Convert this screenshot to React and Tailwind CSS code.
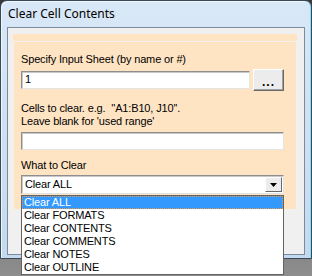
export default function App() {
  const items = ["Clear ALL", "Clear FORMATS", "Clear CONTENTS", "Clear COMMENTS", "Clear NOTES", "Clear OUTLINE"];
  const sunken =
    "border border-t-[#8e8e8e] border-l-[#8e8e8e] border-b-[#e4e4e4] border-r-[#e4e4e4] bg-white shadow-[inset_1px_1px_0_#c8c8c8]";
  return (
    <div
      className="w-[312px] h-[276px] overflow-hidden bg-gradient-to-b from-[#3a3a3a] to-[#8e8e8e] text-black"
      style={{ fontFamily: '"Liberation Sans", Arial, sans-serif' }}
    >
      <div className="relative h-[259px] w-[312px] rounded-t-[7px] border border-[#3b4856] bg-gradient-to-b from-[#d9e8f7] via-[#cfe0f3] to-[#c4d9ef] shadow-[inset_-1px_0_0_#7fe0f5,inset_1px_1px_0_#eef6fd]">
        <div
          className="h-[26px] pl-[7px] pt-[6px] text-[12px] leading-[14px] text-black"
          style={{ fontFamily: '"Noto Sans", sans-serif' }}
        >
          Clear Cell Contents
        </div>
        <div className="mx-[6px] h-[228px] border border-[#7b8b9e] bg-[#f0f0f0] pl-[5px] pr-[7px] pt-[6px]">
          <div className="h-[175px] bg-[#ffe4c4] pt-[7px]">
            <div className="h-full border-t border-l border-r border-[#f6f1ec] pl-[7px] pr-[12px] pt-[11px] text-[11px] leading-[13px] tracking-[-0.15px]">
              <div>Specify Input Sheet (by name or #)</div>
              <div className="mt-[3px] flex h-[22px] items-center gap-[3px]">
                <div className={"h-[18px] flex-1 pl-[3px] leading-[15px] " + sunken}>1</div>
                <div className="flex h-[22px] w-[31px] items-end justify-center border border-t-white border-l-white border-b-[#696969] border-r-[#696969] bg-[#ececec] pb-[3px] shadow-[inset_-1px_-1px_0_#a0a0a0] text-[12px] font-bold leading-[10px] tracking-[1px]">
                  ...
                </div>
              </div>
              <div className="mt-[11px]">Cells to clear. e.g.&nbsp;&nbsp;''A1:B10, J10''.</div>
              <div>Leave blank for 'used range'</div>
              <div className={"mt-[4px] h-[18px] " + sunken}></div>
              <div className="mt-[9px]">What to Clear</div>
              <div className="relative mt-[3px]">
                <div className={"flex h-[19px] items-center justify-between pl-[3px] " + sunken}>
                  <span>Clear ALL</span>
                  <div className="mr-[1px] flex h-[15px] w-[17px] items-center justify-center border border-t-white border-l-white border-b-[#696969] border-r-[#696969] bg-[#ececec]">
                    <svg width="7" height="4" viewBox="0 0 7 4">
                      <path d="M0 0H7L3.5 4Z" fill="#000" />
                    </svg>
                  </div>
                </div>
                <div className="absolute left-0 right-0 top-[20px] border border-[#646464] bg-white">
                  {items.map((t, i) => (
                    <div
                      key={t}
                      className={
                        "h-[13px] pl-[2px] leading-[13px] " +
                        (i === 0 ? "bg-[#3399ff] text-white outline outline-1 outline-dotted outline-[#e89a4a] -outline-offset-1" : "")
                      }
                    >
                      {t}
                    </div>
                  ))}
                </div>
              </div>
            </div>
          </div>
        </div>
      </div>
    </div>
  );
}
